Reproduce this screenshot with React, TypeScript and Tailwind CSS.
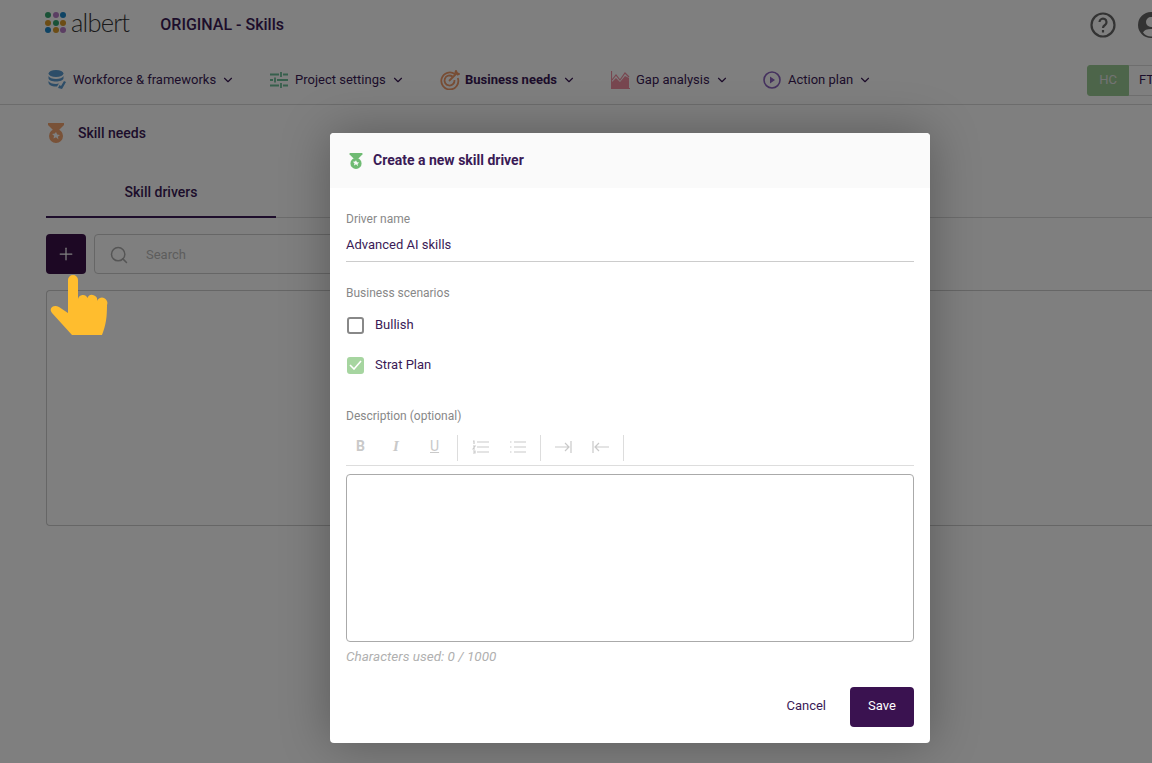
import { ChevronDown, Plus, Search } from "lucide-react";

const font = { fontFamily: "Roboto, sans-serif" };

const Medal = ({ color, size = 18 }: { color: string; size?: number }) => (
  <svg width={size} height={size} viewBox="0 0 18 20" fill={color}>
    <path d="M1 0h16v2l-5 5H6L1 2z" />
    <path fillRule="evenodd" d="M9 6a7 7 0 1 1 0 14A7 7 0 0 1 9 6zm0 3l1.200 2.600 2.800.3-2.100 1.900.6 2.800L9 14.200l-2.500 1.400.6-2.800L5 10.900l2.800-.3z" />
  </svg>
);

const DbIcon = () => (
  <svg width="18" height="20" viewBox="0 0 18 20" fill="#5a9bd0">
    <ellipse cx="8" cy="3.500" rx="7.500" ry="3.500" />
    <path d="M.5 6c1 2 4 3 7.500 3s6.500-1 7.500-3v2.500C15 10.500 12 11.500 8 11.500S1 10.500.5 8.500z" />
    <path d="M.5 11c1 2 4 3 7.500 3l3-.5-2 3H6C3 16 1 15 .5 13z" />
    <path d="M10 18l1.500-3 1.500 1 3-5 2 1-4 7z" />
  </svg>
);

const SlidersIcon = () => (
  <svg width="18" height="16" viewBox="0 0 18 16" stroke="#6dbf98" strokeWidth="1.800" fill="none">
    <path d="M0 2.500h9M13 2.500h5M11 0v5M0 8h3M7 8h11M5 5.500v5M0 13.500h9M13 13.500h5M11 11v5" />
  </svg>
);

const TargetIcon = () => (
  <svg width="20" height="20" viewBox="0 0 20 20" fill="none" stroke="#f09a68" strokeWidth="1.800">
    <path d="M15 4.200A8.500 8.500 0 1 0 17.800 8" />
    <path d="M12.500 6.500A5 5 0 1 0 14.500 10" />
    <path d="M9 11l8-8M15 3l1-2 1 2 2 1-2 .8" />
  </svg>
);

const ChartIcon = () => (
  <svg width="19" height="18" viewBox="0 0 19 18">
    <path d="M1 17V11l4-4 4 4 5-6 4 2v10z" fill="#f08ea0" />
    <path d="M.5 0v17.500H19M1 9l4-5 4 5 5-7 4 4" fill="none" stroke="#f08ea0" strokeWidth="1.200" />
  </svg>
);

const PlayIcon = () => (
  <svg width="18" height="18" viewBox="0 0 18 18">
    <circle cx="9" cy="9" r="8" fill="none" stroke="#8a62bd" strokeWidth="1.600" />
    <path d="M7 5.500l5 3.500-5 3.500z" fill="#8a62bd" />
  </svg>
);

const Logo = () => {
  const dots = ["#35a56f", "#b77cc6", "#1d86c8", "#d99a2b", "#35a56f", "#d99a2b", "#1d86c8", "#d99a2b", "#b77cc6"];
  return (
    <div className="flex items-center gap-[5px] h-[21px]">
      <div className="grid grid-cols-3 gap-[1.500px]">
        {dots.map((c, i) => (
          <svg key={i} width="6" height="6" viewBox="0 0 6 6" className="block">
            <circle cx="3" cy="3" r="3" fill={c} />
          </svg>
        ))}
      </div>
      <span className="text-[25.500px] leading-none tracking-[-0.8px] font-light text-[#333]" style={{ fontFamily: "Lato, sans-serif" }}>
        albert
      </span>
    </div>
  );
};

const navItems = [
  { label: "Workforce & frameworks", icon: <DbIcon />, w: "w-[222px]" },
  { label: "Project settings", icon: <SlidersIcon />, w: "w-[170px]" },
  { label: "Business needs", icon: <TargetIcon />, w: "w-[171px]", bold: true },
  { label: "Gap analysis", icon: <ChartIcon />, w: "w-[152px]" },
  { label: "Action plan", icon: <PlayIcon />, w: "w-[130px]" },
];

const ToolbarIcons = () => (
  <div className="flex items-center h-[26px]">
    <div className="flex items-center h-full border-r border-[#ddd] pr-[12px] pb-[3px] gap-[22px] pl-[10px] text-[#c9c9c9]">
      <span className="w-[15px] text-[14px] font-bold">B</span>
      <span className="w-[15px] text-[15px] font-bold italic" style={{ fontFamily: "Liberation Serif, serif" }}>I</span>
      <span className="w-[15px] text-[14px] underline">U</span>
    </div>
    <div className="flex items-center h-full border-r border-[#ddd] px-[14px] pb-[3px] gap-[20px]">
      <svg width="17" height="14" viewBox="0 0 17 14" stroke="#c9c9c9" fill="none" strokeWidth="1.200">
        <path d="M5 2h12M5 7h12M5 12h12M1 1h1v3M1 6h2L1 9h2M1 11h2v2H1" />
      </svg>
      <svg width="17" height="14" viewBox="0 0 17 14" stroke="#c9c9c9" fill="none" strokeWidth="1.200">
        <path d="M5 2h12M5 7h12M5 12h12M1 2h1.500M1 7h1.500M1 12h1.500" />
      </svg>
    </div>
    <div className="flex items-center h-full border-r border-[#ddd] px-[14px] pb-[3px] gap-[20px]">
      <svg width="17" height="12" viewBox="0 0 17 12" stroke="#c9c9c9" fill="none" strokeWidth="1.200">
        <path d="M0 6h14M10 2l4 4-4 4M16 0v12" />
      </svg>
      <svg width="17" height="12" viewBox="0 0 17 12" stroke="#c9c9c9" fill="none" strokeWidth="1.200">
        <path d="M17 6H3M7 2L3 6l4 4M1 0v12" />
      </svg>
    </div>
  </div>
);

export default function App() {
  return (
    <div className="relative w-[1152px] h-[763px] overflow-hidden bg-white text-[#3a1a56]" style={font}>
      {/* page */}
      <div className="flex items-start h-[56px] pl-[45px] pt-[12px]">
        <Logo />
        <span className="ml-[31px] mt-[1px] text-[16px] leading-[24px] font-medium">ORIGINAL - Skills</span>
        <div className="ml-auto flex items-center gap-[22px] mr-[-12px]">
          <svg width="26" height="26" viewBox="0 0 26 26" fill="none" stroke="#666" strokeWidth="2.200" className="block">
            <circle cx="13" cy="13" r="11.500" />
            <path d="M9.500 10a3.500 3.500 0 1 1 5.500 3c-1.500 1-2 1.500-2 3M13 18v2.500" />
          </svg>
          <svg width="26" height="26" viewBox="0 0 26 26" fill="#666" className="block">
            <path fillRule="evenodd" d="M13 0a13 13 0 1 1 0 26a13 13 0 0 1 0-26zm0 5a5 5 0 1 0 0 10a5 5 0 0 0 0-10zm0 12c-4 0-7 1-8 3.500A10 10 0 0 0 21 20.500C20 18 17 17 13 17z" />
          </svg>
        </div>
      </div>
      <div className="flex items-center h-[49px] pl-[48px] border-b border-[#d9d9d9]">
        {navItems.map((n) => (
          <div key={n.label} className={`${n.w} flex items-center text-[13px] ${n.bold ? "font-bold" : ""}`}>
            <span className="w-[25px] flex shrink-0">{n.icon}</span>
            <span>{n.label}</span>
            <ChevronDown size={14} className="ml-[5px]" />
          </div>
        ))}
        <div className="ml-auto flex h-[31px] text-[13px] mr-[-17px]">
          <div className="w-[42px] flex items-center justify-center rounded-l-[3px] bg-[#9bcb95] text-[#e6e6e6] border border-[#9bcb95]">HC</div>
          <div className="w-[40px] flex items-center pl-[10px] border border-l-0 border-[#ddd] whitespace-nowrap">FTE</div>
        </div>
      </div>
      <div className="pl-[46px]">
        <div className="flex items-center gap-[12px] mt-[14px] h-[28px]">
          <Medal color="#f2a470" size={20} />
          <span className="text-[14px] font-medium">Skill needs</span>
        </div>
        <div className="mt-[21px] border-b border-[#d9d9d9] h-[50px] flex">
          <div className="w-[230px] h-[50px] border-b-2 border-[#3a1a56] flex items-center justify-center text-[14px] font-medium pt-[1px]">
            Skill drivers
          </div>
        </div>
        <div className="flex gap-[8px] mt-[16px] h-[40px]">
          <div className="w-[40px] rounded-[4px] bg-[#3a1048] flex items-center justify-center text-white">
            <Plus size={20} strokeWidth={1.500} />
          </div>
          <div className="w-[500px] flex items-center pl-[14px] pt-[1px] border border-[#ccc] rounded-[4px] text-[13px] text-[#bbb]">
            <Search size={20} strokeWidth={1.800} className="text-[#aaa]" />
            <span className="ml-[17px]">Search</span>
          </div>
        </div>
        <div className="mt-[16px] h-[236px] border border-[#ccc] rounded-[4px] mr-[-2px] border-r-0" />
      </div>

      {/* hand cursor */}
      <svg className="absolute left-[50px] top-[275px] z-10" width="58" height="61" viewBox="0 0 58 61" fill="#ffbd2e">
        <path d="M18 5a5 5 0 0 1 10 0V24a5 5 0 0 1 9.500-1a5 5 0 0 1 9.500 3a5 5 0 0 1 10 4c0 12-1 20-5 30H22L2 38c-4-5 2-9 7-6l9 6z" />
      </svg>

      {/* backdrop */}
      <div className="absolute inset-0 bg-black/50" />
      <div className="absolute left-[330px] top-[133px] w-[600px] h-[610px] rounded-[4px] bg-white shadow-[0_0_50px_rgba(0,0,0,0.3)] flex flex-col">
        <div className="h-[55px] shrink-0 rounded-t-[4px] bg-[#fafafa] flex items-center pl-[18px] gap-[9px]">
          <Medal color="#6fbb73" size={16} />
          <span className="text-[14px] font-bold">Create a new skill driver</span>
        </div>
        <div className="flex-1 px-[16px] flex flex-col">
          <label className="mt-[24px] text-[12px] leading-[14px] text-[#888]">Driver name</label>
          <div className="mt-[10px] h-[26px] border-b border-[#ccc] text-[13px] leading-[18px]">Advanced AI skills</div>
          <label className="mt-[24px] text-[12px] leading-[14px] text-[#888]">Business scenarios</label>
          <div className="mt-[13px] h-[24px] flex items-center text-[13px]">
            <span className="w-[17px] h-[17px] rounded-[3px] border-2 border-[#888] ml-[1px] mr-[11px]" />
            Bullish
          </div>
          <div className="mt-[16px] h-[24px] flex items-center text-[13px]">
            <span className="w-[17px] h-[17px] rounded-[3px] bg-[#a6d5a0] ml-[1px] mr-[11px] flex items-center justify-center">
              <svg width="13" height="10" viewBox="0 0 13 10" fill="none" stroke="#fff" strokeWidth="1.600">
                <path d="M1 5l4 4 7-8" />
              </svg>
            </span>
            Strat Plan
          </div>
          <label className="mt-[32px] text-[12px] leading-[14px] text-[#888]">Description (optional)</label>
          <div className="mt-[12px] pb-[4px] border-b border-[#ddd]">
            <ToolbarIcons />
          </div>
          <div className="mt-[8px] h-[168px] shrink-0 border border-[#aaa] rounded-[4px]" />
          <div className="mt-[4px] text-[13.500px] italic text-[#b0b0b0]">Characters used: 0 / 1000</div>
          <div className="mt-auto mb-[16px] flex items-center justify-end">
            <span className="text-[13px] mr-[24px] pb-[2px]">Cancel</span>
            <div className="w-[64px] h-[40px] rounded-[4px] bg-[#3a1250] text-white flex items-center justify-center text-[13px] pb-[2px]">
              Save
            </div>
          </div>
        </div>
      </div>
    </div>
  );
}
